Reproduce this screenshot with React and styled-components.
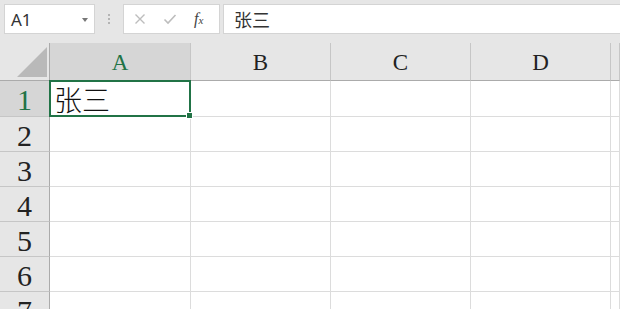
import React from 'react';
import styled, { createGlobalStyle } from 'styled-components';

const GlobalStyle = createGlobalStyle`
  html, body {
    margin: 0;
    padding: 0;
    background: #ffffff;
    overflow: hidden;
  }
  body {
    font-family: "Noto Sans", "Noto Sans CJK SC", sans-serif;
  }
`;

const Window = styled.div`
  width: 620px;
  height: 309px;
  background: #e6e6e6;
  display: flex;
  flex-direction: column;
  overflow: hidden;
`;

const FormulaBar = styled.div`
  display: flex;
  align-items: center;
  height: 43px;
  padding: 4px 0 9px 4px;
  box-sizing: border-box;
  flex-shrink: 0;
`;

const NameBox = styled.div`
  width: 91px;
  height: 30px;
  box-sizing: border-box;
  background: #ffffff;
  border: 1px solid #d4d4d4;
  display: flex;
  align-items: center;
  justify-content: space-between;
  padding: 0 6px 0 6px;
  font-family: "Noto Sans", sans-serif;
  font-size: 17px;
  color: #333333;
`;

const Caret = styled.span`
  width: 0;
  height: 0;
  border-left: 3.5px solid transparent;
  border-right: 3.5px solid transparent;
  border-top: 4px solid #777777;
  margin-top: 1px;
`;

const Grip = styled.div`
  width: 28px;
  display: flex;
  flex-direction: column;
  align-items: center;
  gap: 2px;
  span {
    width: 2px;
    height: 2px;
    background: #b4b4b4;
  }
`;

const ButtonsBox = styled.div`
  width: 97px;
  height: 30px;
  box-sizing: border-box;
  background: #ffffff;
  border: 1px solid #d4d4d4;
  display: flex;
  align-items: center;
  padding: 0 0 0 10px;
  gap: 17px;
`;

const Fx = styled.span`
  font-family: "Liberation Serif", serif;
  font-style: italic;
  font-size: 16px;
  color: #444444;
  sub {
    font-size: 11px;
    vertical-align: 0;
  }
`;

const FormulaInput = styled.div`
  flex: 1;
  height: 30px;
  box-sizing: border-box;
  margin-left: 3px;
  background: #ffffff;
  border-top: 1px solid #d4d4d4;
  border-bottom: 1px solid #d4d4d4;
  border-left: 1px solid #d4d4d4;
  display: flex;
  align-items: center;
  padding-left: 10px;
  font-family: "Noto Sans CJK SC", sans-serif;
  font-size: 18px;
  color: #333333;
`;

const Sheet = styled.div`
  display: grid;
  grid-template-columns: 50px 141px 140px 140px 140px 1fr;
  grid-template-rows: 38px 36px repeat(6, 35px);
  background: #ffffff;
  flex: 1;
`;

const Corner = styled.div`
  background: #e6e6e6;
  border-right: 1px solid #ababab;
  border-bottom: 1px solid #ababab;
  display: flex;
  align-items: flex-end;
  justify-content: flex-end;
  padding: 0 2px 3px 0;
`;

const ColHeader = styled.div`
  background: ${p => (p.$active ? '#d6d6d6' : '#e6e6e6')};
  border-right: 1px solid #c6c6c6;
  border-bottom: 1px solid #ababab;
  display: flex;
  align-items: center;
  justify-content: center;
  padding-top: 2px;
  font-family: "Liberation Serif", serif;
  font-size: 23px;
  color: ${p => (p.$active ? '#217346' : '#222222')};
`;

const RowHeader = styled.div`
  background: ${p => (p.$active ? '#d6d6d6' : '#e6e6e6')};
  border-right: 1px solid #ababab;
  border-bottom: 1px solid #c6c6c6;
  display: flex;
  align-items: center;
  justify-content: center;
  padding-top: 3px;
  font-family: "Liberation Serif", serif;
  font-size: 30px;
  line-height: 1;
  color: ${p => (p.$active ? '#217346' : '#222222')};
`;

const Cell = styled.div`
  position: relative;
  border-right: 1px solid #dcdcdc;
  border-bottom: 1px solid #dcdcdc;
  display: flex;
  align-items: center;
  padding-left: 4px;
  font-family: "Noto Sans CJK SC", sans-serif;
  font-weight: 300;
  font-size: 28px;
  color: #111111;
  ${p =>
    p.$selected &&
    `
    &::after {
      content: '';
      position: absolute;
      left: -1px;
      top: -1px;
      right: -1px;
      bottom: -1px;
      border: 2px solid #217346;
      pointer-events: none;
    }
    &::before {
      content: '';
      position: absolute;
      right: -3px;
      bottom: -3px;
      width: 5px;
      height: 5px;
      background: #217346;
      border: 1px solid #ffffff;
      z-index: 2;
    }
  `}
`;

const columns = ['A', 'B', 'C', 'D', ''];
const rows = [1, 2, 3, 4, 5, 6, 7];
const data = { A1: '张三' };

export default function App() {
  return (
    <Window>
      <GlobalStyle />
      <FormulaBar>
        <NameBox>
          A1
          <Caret />
        </NameBox>
        <Grip>
          <span />
          <span />
          <span />
        </Grip>
        <ButtonsBox>
          <svg width="12" height="12" viewBox="0 0 12 12">
            <path d="M1.5 1.5 L10.5 10.5 M10.5 1.5 L1.5 10.5" stroke="#bdbdbd" strokeWidth="1.4" fill="none" />
          </svg>
          <svg width="14" height="12" viewBox="0 0 14 12">
            <path d="M1.5 6.5 L5 10 L12.5 2" stroke="#bdbdbd" strokeWidth="1.6" fill="none" />
          </svg>
          <Fx>
            f<sub>x</sub>
          </Fx>
        </ButtonsBox>
        <FormulaInput>张三</FormulaInput>
      </FormulaBar>
      <Sheet>
        <Corner>
          <svg width="30" height="30" viewBox="0 0 30 30">
            <polygon points="30,0 30,30 0,30" fill="#b9b9b9" />
          </svg>
        </Corner>
        {columns.map(c => (
          <ColHeader key={c || 'E'} $active={c === 'A'}>
            {c}
          </ColHeader>
        ))}
        {rows.map(r => (
          <React.Fragment key={r}>
            <RowHeader $active={r === 1}>{r}</RowHeader>
            {columns.map(c => {
              const id = `${c}${r}`;
              return (
                <Cell key={id || `E${r}`} $selected={id === 'A1'}>
                  {data[id]}
                </Cell>
              );
            })}
          </React.Fragment>
        ))}
      </Sheet>
    </Window>
  );
}
